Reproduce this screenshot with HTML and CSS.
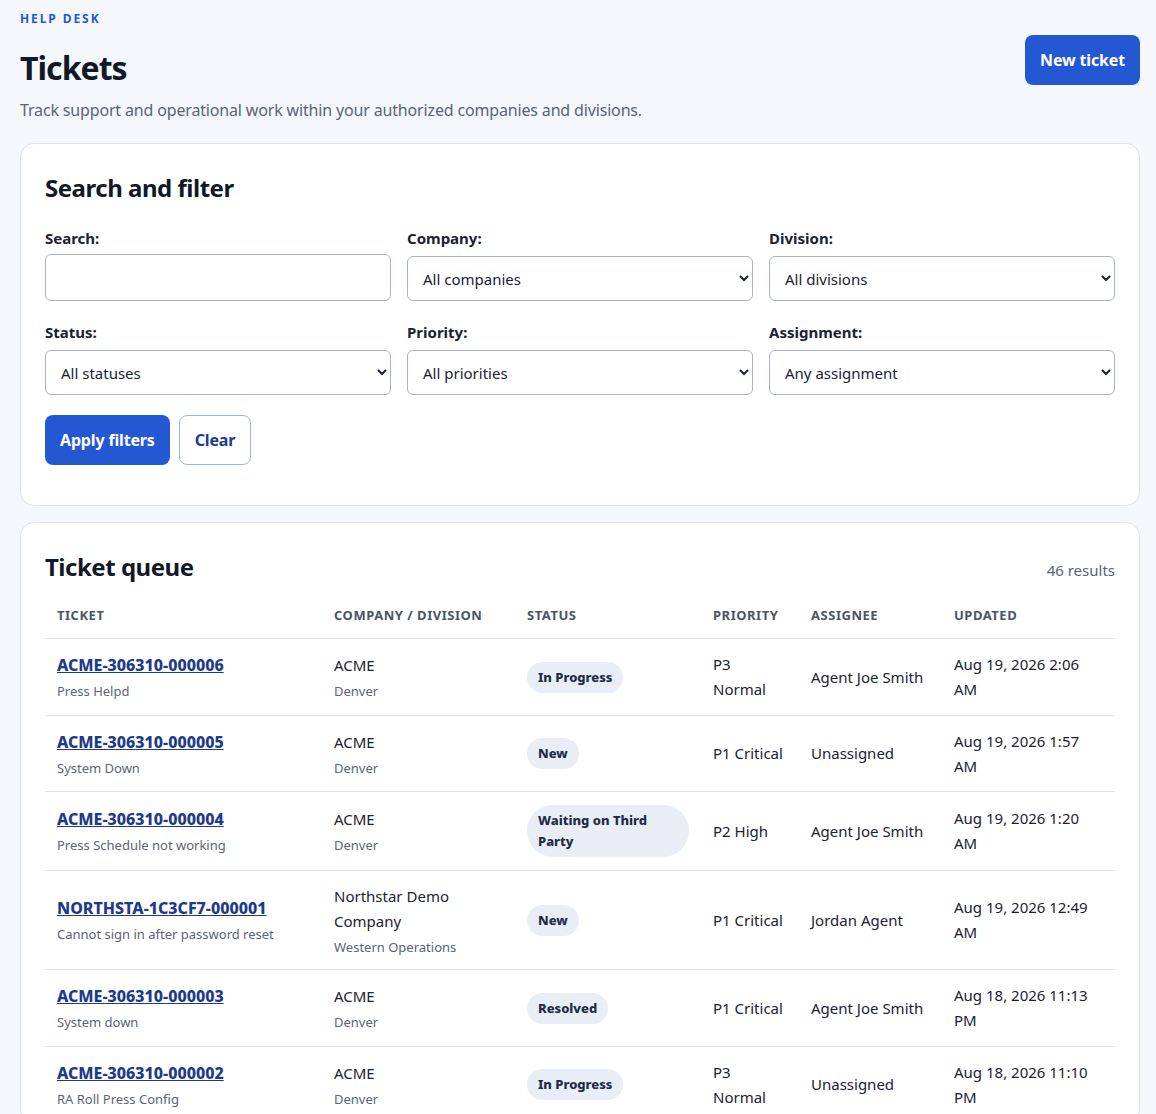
FILE: index.html
```html
<!DOCTYPE html>
<html lang="en">
<head>
	<meta charset="UTF-8">
	<title>Tickets</title>
	<link rel="stylesheet" href="styles.css">
</head>
<body>
	<header class="page_head">
		<div class="page_head-text">
			<p class="eyebrow">Help desk</p>
			<h1 class="page_title">Tickets</h1>
			<p class="page_lead">Track support and operational work within your authorized companies and divisions.</p>
		</div>
		<a class="btn btn--primary btn--new" href="#">New ticket</a>
	</header>

	<section class="card">
		<h2 class="card_title">Search and filter</h2>
		<form class="filters">
			<div class="field">
				<label for="q">Search:</label>
				<input type="text" id="q" class="input">
			</div>
			<div class="field">
				<label for="company">Company:</label>
				<select id="company" class="select"><option>All companies</option></select>
			</div>
			<div class="field">
				<label for="division">Division:</label>
				<select id="division" class="select"><option>All divisions</option></select>
			</div>
			<div class="field">
				<label for="status">Status:</label>
				<select id="status" class="select"><option>All statuses</option></select>
			</div>
			<div class="field">
				<label for="priority">Priority:</label>
				<select id="priority" class="select"><option>All priorities</option></select>
			</div>
			<div class="field">
				<label for="assignment">Assignment:</label>
				<select id="assignment" class="select"><option>Any assignment</option></select>
			</div>
			<div class="filters_actions">
				<button type="submit" class="btn btn--primary">Apply filters</button>
				<a href="#" class="btn btn--outline">Clear</a>
			</div>
		</form>
	</section>

	<section class="card card--queue">
		<div class="queue_head">
			<h2 class="card_title">Ticket queue</h2>
			<span class="queue_count">46 results</span>
		</div>
		<table class="queue">
			<colgroup>
				<col class="col-ticket">
				<col class="col-company">
				<col class="col-status">
				<col class="col-priority">
				<col class="col-assignee">
				<col class="col-updated">
			</colgroup>
			<thead>
				<tr>
					<th>Ticket</th>
					<th>Company / Division</th>
					<th>Status</th>
					<th>Priority</th>
					<th>Assignee</th>
					<th>Updated</th>
				</tr>
			</thead>
			<tbody>
				<tr>
					<td><a href="#" class="ticket_link">ACME-306310-000006</a><span class="sub">Press Helpd</span></td>
					<td>ACME<span class="sub">Denver</span></td>
					<td><span class="pill">In Progress</span></td>
					<td>P3 Normal</td>
					<td>Agent Joe Smith</td>
					<td>Aug 19, 2026 2:06 AM</td>
				</tr>
				<tr>
					<td><a href="#" class="ticket_link">ACME-306310-000005</a><span class="sub">System Down</span></td>
					<td>ACME<span class="sub">Denver</span></td>
					<td><span class="pill">New</span></td>
					<td>P1 Critical</td>
					<td>Unassigned</td>
					<td>Aug 19, 2026 1:57 AM</td>
				</tr>
				<tr>
					<td><a href="#" class="ticket_link">ACME-306310-000004</a><span class="sub">Press Schedule not working</span></td>
					<td>ACME<span class="sub">Denver</span></td>
					<td><span class="pill">Waiting on Third Party</span></td>
					<td>P2 High</td>
					<td>Agent Joe Smith</td>
					<td>Aug 19, 2026 1:20 AM</td>
				</tr>
				<tr>
					<td><a href="#" class="ticket_link">NORTHSTA-1C3CF7-000001</a><span class="sub">Cannot sign in after password reset</span></td>
					<td>Northstar Demo Company<span class="sub">Western Operations</span></td>
					<td><span class="pill">New</span></td>
					<td>P1 Critical</td>
					<td>Jordan Agent</td>
					<td>Aug 19, 2026 12:49 AM</td>
				</tr>
				<tr>
					<td><a href="#" class="ticket_link">ACME-306310-000003</a><span class="sub">System down</span></td>
					<td>ACME<span class="sub">Denver</span></td>
					<td><span class="pill">Resolved</span></td>
					<td>P1 Critical</td>
					<td>Agent Joe Smith</td>
					<td>Aug 18, 2026 11:13 PM</td>
				</tr>
				<tr>
					<td><a href="#" class="ticket_link">ACME-306310-000002</a><span class="sub">RA Roll Press Config</span></td>
					<td>ACME<span class="sub">Denver</span></td>
					<td><span class="pill">In Progress</span></td>
					<td>P3 Normal</td>
					<td>Unassigned</td>
					<td>Aug 18, 2026 11:10 PM</td>
				</tr>
			</tbody>
		</table>
	</section>
</body>
</html>
```

FILE: styles.css
```css
body {
	margin: 0;
	padding: 0 16px 40px 20px;
	background: #f4f7fc;
	color: #1b2232;
	font-family: "Noto Sans", "Open Sans", Arial, sans-serif;
	font-size: 15px;
}

/* page header */
.page_head {
	display: flex;
	justify-content: space-between;
	align-items: flex-start;
	padding-top: 11px;
	margin-bottom: 21px;
}
.eyebrow {
	margin: 0;
	color: #2459d6;
	font-size: 12px;
	font-weight: 700;
	letter-spacing: 0.16em;
	text-transform: uppercase;
	line-height: 16px;
}
.page_title {
	margin: 19px 0 0;
	color: #111827;
	font-size: 32px;
	line-height: 44px;
	letter-spacing: -0.03em;
}
.page_lead {
	margin: 8px 0 0;
	color: #5b6473;
	font-size: 16px;
	line-height: 24px;
	letter-spacing: -0.01em;
}
.btn--new {
	margin-top: 24px;
}

/* buttons */
.btn {
	display: inline-flex;
	align-items: center;
	justify-content: center;
	box-sizing: border-box;
	height: 50px;
	padding: 0 14px;
	border: 1px solid transparent;
	border-radius: 8px;
	font-family: inherit;
	font-size: 16px;
	font-weight: 700;
	letter-spacing: -0.01em;
	text-decoration: none;
	cursor: pointer;
}
.btn--primary {
	background: #2458d3;
	color: #fff;
}
.btn--outline {
	background: #fff;
	border-color: #9bb6ea;
	color: #1e3a8a;
	padding: 0 15px;
}

/* cards */
.card {
	background: #fff;
	border: 1px solid #dde3ec;
	border-radius: 14px;
	padding: 28px 24px 40px;
	margin-bottom: 16px;
}
.card--queue {
	padding-bottom: 0;
}
.card_title {
	margin: 0;
	font-size: 24px;
	line-height: 32px;
	letter-spacing: -0.02em;
	color: #111827;
}

/* filter form */
.filters {
	display: grid;
	grid-template-columns: repeat(3, 1fr);
	column-gap: 16px;
	row-gap: 21px;
	margin-top: 24px;
}
.field {
	display: flex;
	flex-direction: column;
	justify-content: flex-end;
}
.field label {
	font-weight: 700;
	font-size: 15px;
	line-height: 20px;
	margin-bottom: 6px;
}
.input,
.select {
	box-sizing: border-box;
	width: 100%;
	border: 1px solid #aab4c5;
	border-radius: 6px;
	background: #fff;
	color: #1b2232;
	font-family: inherit;
	font-size: 15px;
	padding: 0 10px 0 15px;
}
.input {
	height: 47px;
}
.select {
	height: 45px;
	margin-top: 2px;
	padding-left: 11px;
}
.filters_actions {
	grid-column: 1 / -1;
	display: flex;
	gap: 9px;
	margin-top: -1px;
}

/* queue */
.queue_head {
	display: flex;
	justify-content: space-between;
	align-items: baseline;
	margin-bottom: 10px;
}
.queue_count {
	color: #5b6473;
	font-size: 15px;
}
.queue {
	width: 100%;
	border-collapse: collapse;
	table-layout: fixed;
}
.col-ticket { width: 277px; }
.col-company { width: 193px; }
.col-status { width: 186px; }
.col-priority { width: 98px; }
.col-assignee { width: 143px; }
.col-updated { width: 173px; }

.queue th {
	text-align: left;
	font-size: 13px;
	font-weight: 700;
	letter-spacing: 0.04em;
	text-transform: uppercase;
	color: #4a5565;
	line-height: 20px;
	padding: 12px 12px 13px;
	border-bottom: 1px solid #dfe4ec;
}
.queue td {
	vertical-align: middle;
	padding: 13px 12px 12.5px;
	line-height: 25px;
	border-bottom: 1px solid #dfe4ec;
}
.ticket_link {
	color: #1e3a8a;
	font-size: 16px;
	font-weight: 800;
	text-decoration: underline;
}
.sub {
	display: block;
	margin-top: 3px;
	font-size: 13px;
	line-height: 20px;
	color: #5b6473;
}
.pill {
	display: inline-block;
	padding: 5px 11px;
	border-radius: 999px;
	background: #e8edf6;
	color: #1f2a44;
	font-size: 13px;
	font-weight: 800;
	line-height: 21px;
}
```
